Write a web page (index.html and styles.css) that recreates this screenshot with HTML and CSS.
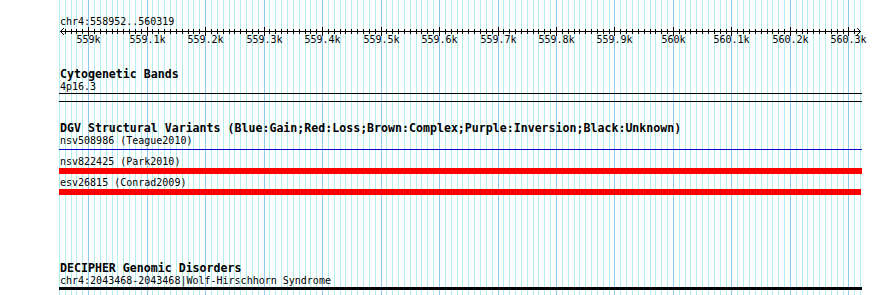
FILE: index.html
```html
<!DOCTYPE html>
<html>
<head>
<meta charset="utf-8">
<link rel="stylesheet" href="styles.css">
</head>
<body>
<div class="browser">
  <svg class="grid" id="grid" width="890" height="295" xmlns="http://www.w3.org/2000/svg"></svg>
  <div class="tracks">
    <div class="pos">chr4:558952..560319</div>
    <svg class="ruler" id="ruler" width="890" height="20" xmlns="http://www.w3.org/2000/svg"></svg>

    <section class="track track-cyto">
      <div class="title">Cytogenetic Bands</div>
      <div class="label">4p16.3</div>
      <div class="band"></div>
    </section>

    <section class="track track-dgv">
      <div class="title">DGV Structural Variants (Blue:Gain;Red:Loss;Brown:Complex;Purple:Inversion;Black:Unknown)</div>
      <div class="label">nsv508986 (Teague2010)</div>
      <div class="feat feat-gain"></div>
      <div class="label label-gap">nsv822425 (Park2010)</div>
      <div class="feat feat-loss feat-loss-1"></div>
      <div class="label label-gap2">esv26815 (Conrad2009)</div>
      <div class="feat feat-loss feat-loss-2"></div>
    </section>

    <section class="track track-decipher">
      <div class="title">DECIPHER Genomic Disorders</div>
      <div class="label">chr4:2043468-2043468|Wolf-Hirschhorn Syndrome</div>
      <div class="feat feat-black"></div>
    </section>
  </div>
</div>
<script src="script.js"></script>
</body>
</html>
```

FILE: styles.css
```css
html, body {
  margin: 0;
  padding: 0;
  background: #ffffff;
}

.browser {
  position: relative;
  width: 890px;
  height: 295px;
  overflow: hidden;
  font-family: "DejaVu Sans Mono", "Liberation Mono", monospace;
  font-size: 10px;
  color: #000000;
}

.grid {
  position: absolute;
  left: 0;
  top: 0;
  z-index: 0;
}

.tracks {
  position: relative;
  z-index: 1;
  padding-top: 16px;
}

.pos {
  height: 10px;
  line-height: 12px;
  padding-left: 60px;
  white-space: nowrap;
}

.ruler {
  display: block;
  overflow: visible;
}

.ruler text {
  font-family: "DejaVu Sans Mono", "Liberation Mono", monospace;
  font-size: 10px;
  fill: #000000;
}

.title {
  height: 12px;
  line-height: 12px;
  padding-left: 60px;
  font-weight: bold;
  font-size: 11.6px;
  white-space: nowrap;
}

.label {
  height: 12px;
  line-height: 13px;
  padding-left: 60px;
  white-space: nowrap;
}

.track-cyto {
  margin-top: 22px;
}

.band {
  margin: 1px 0 0 59px;
  width: 803px;
  height: 7px;
  border-top: 1px solid #000000;
  border-bottom: 1px solid #000000;
}

.track-dgv {
  margin-top: 20px;
}

.feat {
  margin-left: 59px;
}

.feat-gain {
  margin-top: 3px;
  width: 803px;
  height: 1px;
  background: #0000c8;
}

.label-gap {
  margin-top: 5px;
}

.label-gap2 {
  margin-top: 2px;
}

.feat-loss {
  margin-top: 1px;
  height: 6px;
  background: #ff0000;
}

.feat-loss-1 {
  width: 803px;
}

.feat-loss-2 {
  width: 802px;
}

.track-decipher {
  margin-top: 67px;
}

.feat-black {
  margin-top: 1px;
  width: 803px;
  height: 3px;
  background: #000000;
}
```

FILE: script.js
```js
(function () {
  var NS = 'http://www.w3.org/2000/svg';
  var winStart = 558951;
  var scale = 800 / 1368;
  function px(bp) { return Math.floor(60 + (bp - winStart) * scale); }
  function rect(parent, x, y, w, h, fill) {
    var r = document.createElementNS(NS, 'rect');
    r.setAttribute('x', x); r.setAttribute('y', y);
    r.setAttribute('width', w); r.setAttribute('height', h);
    r.setAttribute('fill', fill);
    parent.appendChild(r);
    return r;
  }

  var grid = document.getElementById('grid');
  for (var bp = 558950; bp <= 560320; bp += 10) {
    rect(grid, px(bp), 0, 1, 295, bp % 100 === 0 ? '#8ccaf0' : '#b0eef0');
  }

  var ruler = document.getElementById('ruler');
  // ruler svg top sits at page y = 26
  rect(ruler, 60, 5, 801, 1, '#000000');
  for (var t = 558960; t <= 560310; t += 10) {
    var x = px(t);
    if (t % 100 === 0) {
      rect(ruler, x, 1, 1, 9, '#000000');
      var lab = document.createElementNS(NS, 'text');
      var v = t / 1000;
      lab.textContent = (Math.round(v * 10) / 10) + 'k';
      lab.setAttribute('x', x + 0.5);
      lab.setAttribute('y', 17);
      lab.setAttribute('text-anchor', 'middle');
      ruler.appendChild(lab);
    } else {
      rect(ruler, x, 3, 1, 5, '#000000');
    }
  }
  // arrow heads
  var arrows = [
    [[60, 5], [61, 4], [61, 6], [62, 3], [62, 7], [63, 2], [63, 8]],
    [[860, 5], [859, 4], [859, 6], [858, 3], [858, 7], [857, 2], [857, 8]]
  ];
  arrows.forEach(function (pts) {
    pts.forEach(function (p) { rect(ruler, p[0], p[1], 1, 1, '#000000'); });
  });
})();
```
